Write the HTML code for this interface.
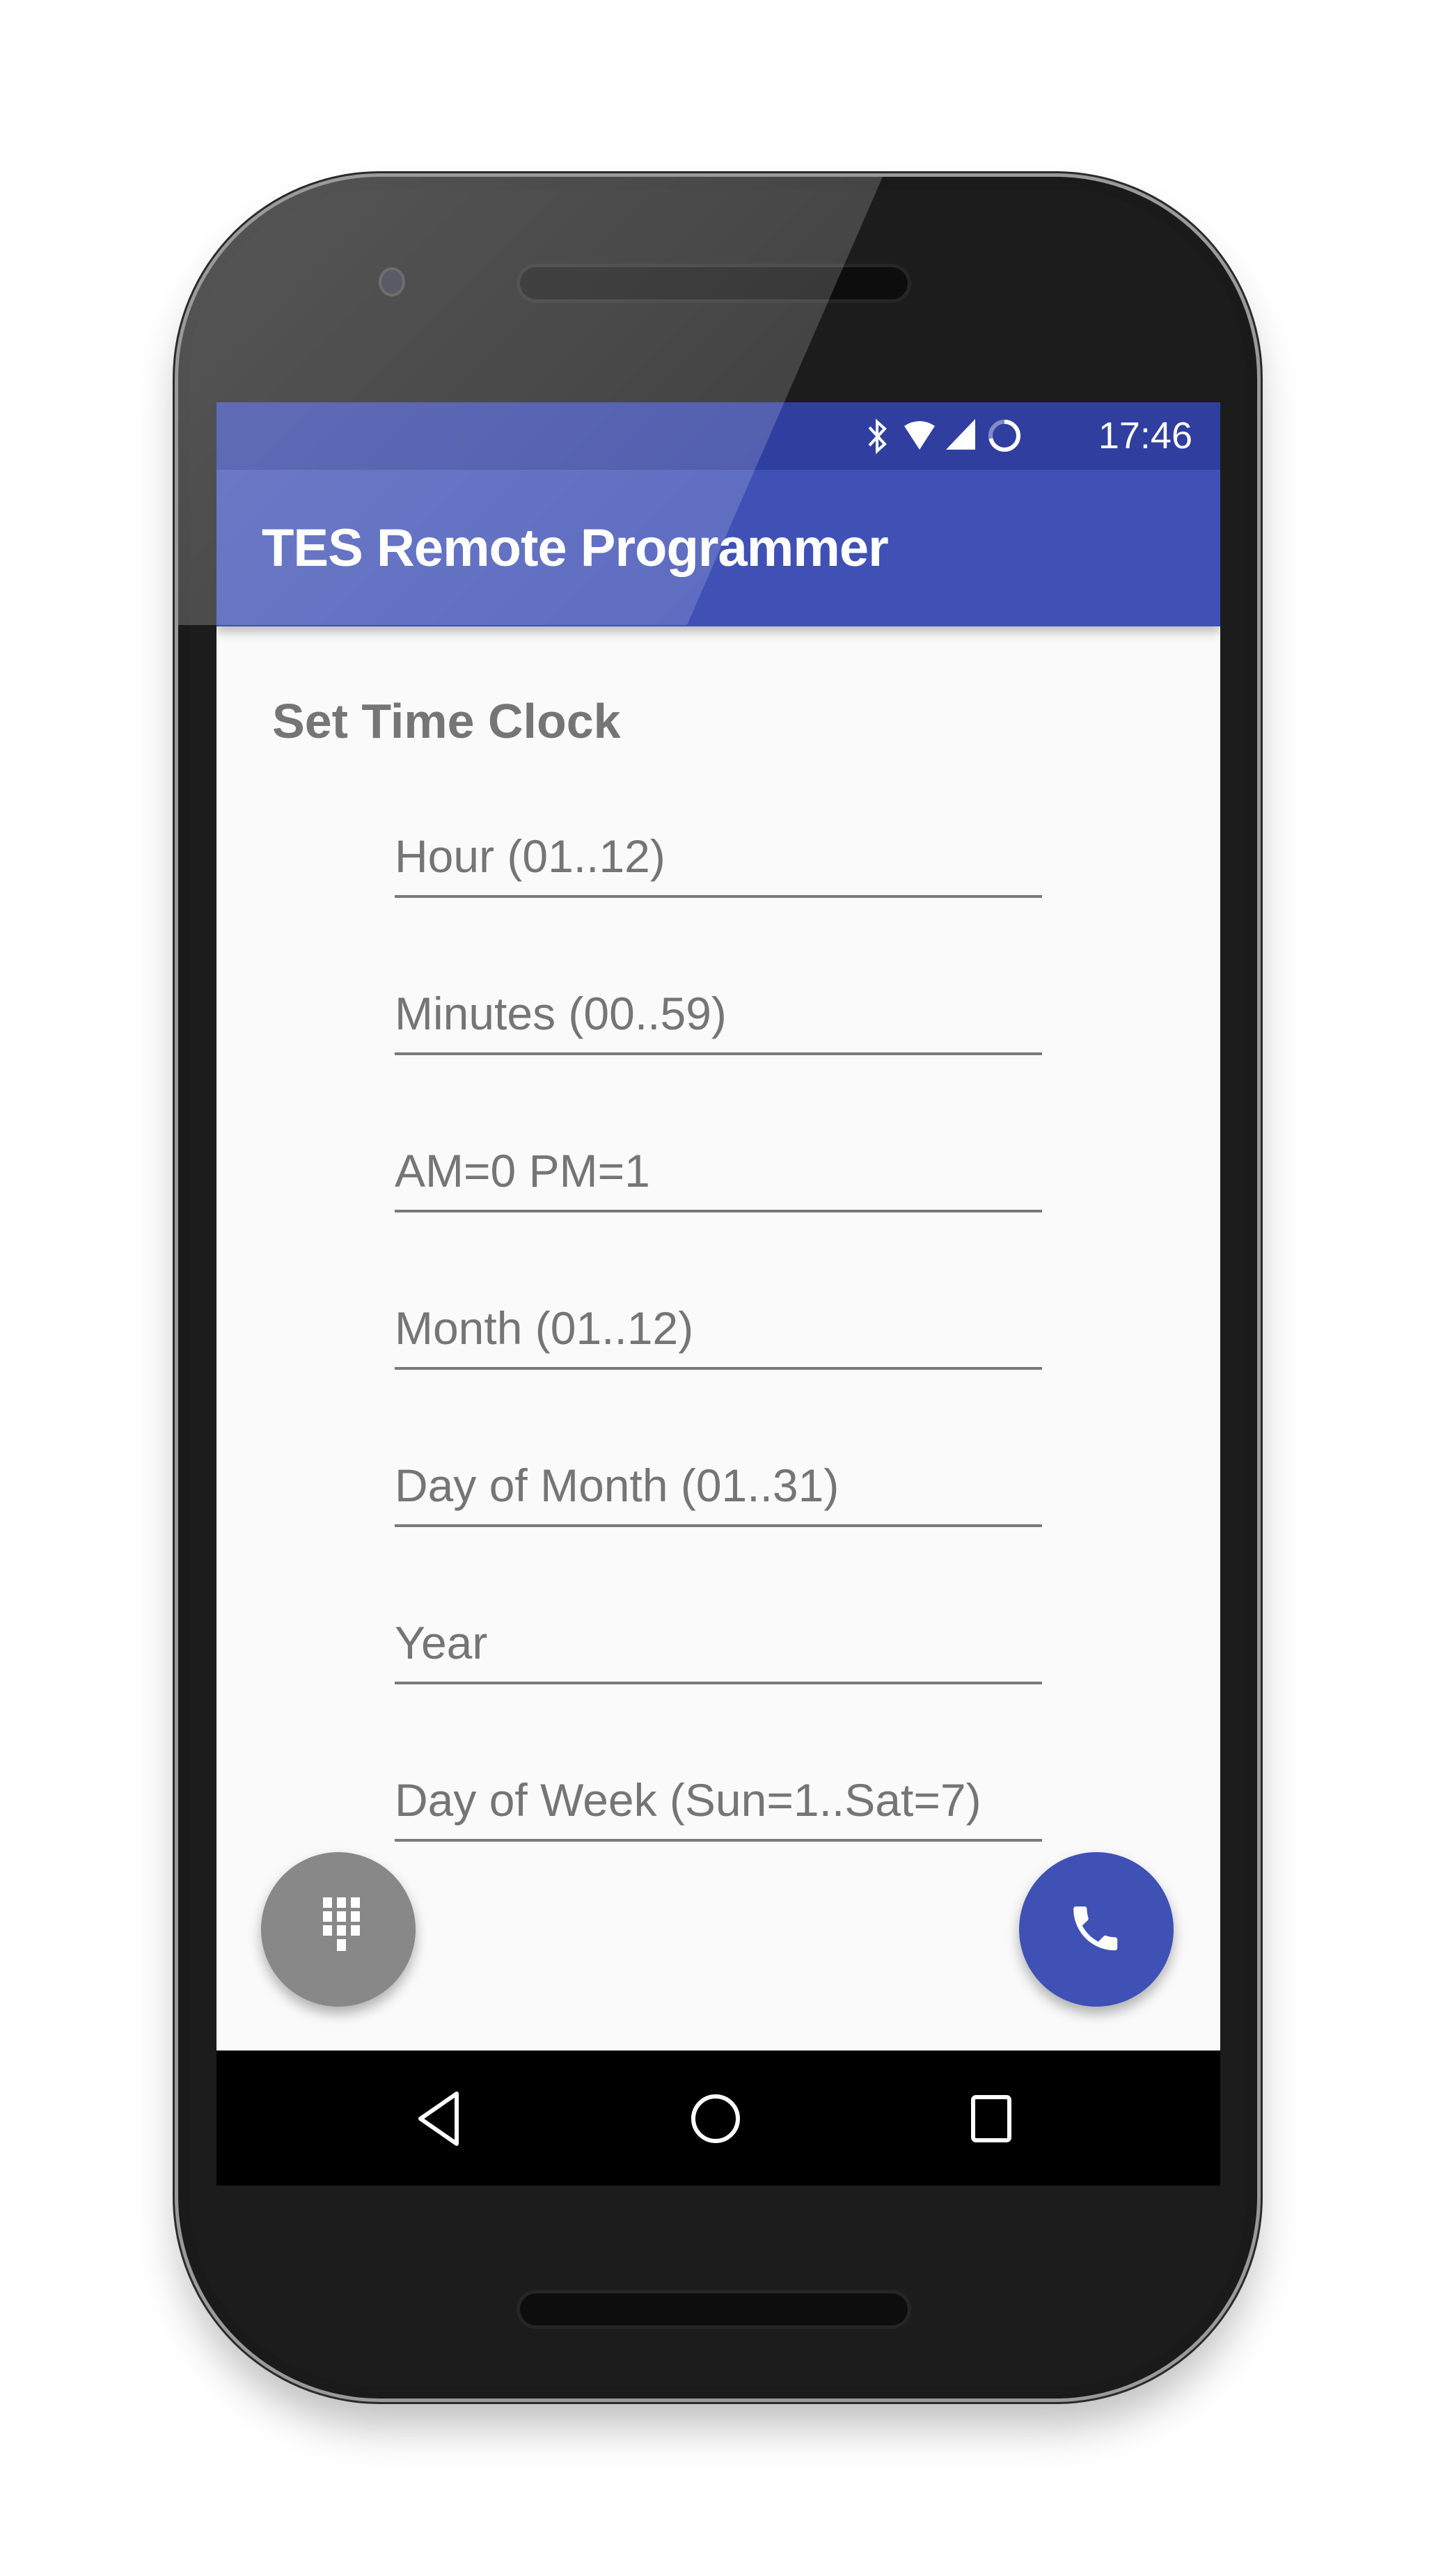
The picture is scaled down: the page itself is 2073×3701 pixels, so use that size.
<!DOCTYPE html>
<html><head><meta charset="utf-8"><style>
html,body{margin:0;padding:0;background:#fff;}
body{width:2073px;height:3701px;position:relative;overflow:hidden;font-family:"Liberation Sans",sans-serif;}
.abs{position:absolute;}
.phone{left:256px;top:254px;width:1550px;height:3192px;border-radius:290px;background:#1a1a1a;
 box-shadow:0 0 0 5px #9a9a9a,0 0 0 8px #2a2a2a,0 40px 60px rgba(0,0,0,0.25);}
.inner{left:272px;top:272px;width:1518px;height:3156px;border-radius:270px;background:#1c1c1c;}
.screen{left:311px;top:578px;width:1442px;height:2368px;background:#fafafa;overflow:hidden;}
.status{left:0;top:0;width:1442px;height:97px;background:#303f9f;}
.appbar{left:0;top:97px;width:1442px;height:225px;background:#3f51b5;box-shadow:0 8px 14px rgba(0,0,0,0.25);}
.title{left:65px;top:97px;height:225px;line-height:225px;color:#fff;font-size:76px;font-weight:bold;letter-spacing:-1px;}
.time{right:40px;top:0;height:97px;line-height:97px;color:#fff;font-size:54px;}
.h{left:80px;top:418px;color:#757575;font-size:70px;font-weight:bold;}
.f{left:256px;width:930px;border-bottom:4px solid #7a7a7a;color:#757575;font-size:66px;height:96px;line-height:80px;}
.fab{width:222px;height:222px;border-radius:50%;box-shadow:0 10px 18px rgba(0,0,0,0.3);}
.nav{left:311px;top:2946px;width:1442px;height:194px;background:#000;}
.spk{width:557px;height:46px;border-radius:23px;background:#0d0d0d;box-shadow:0 0 0 5px #262626;}
.refl{left:256px;top:254px;width:1550px;height:644px;
 clip-path:polygon(0 0,1012px 0,731px 644px,0 644px);
 background:linear-gradient(135deg,rgba(255,255,255,0.26),rgba(255,255,255,0.10));border-top-left-radius:290px;}
</style></head><body>
<div class="abs phone"></div>
<div class="abs inner"></div>
<div class="abs spk" style="left:747px;top:384px;"></div>
<div class="abs" style="left:548px;top:388px;width:30px;height:34px;border-radius:50%;background:#2a2a3a;box-shadow:0 0 0 4px #444;"></div>
<div class="abs spk" style="left:747px;top:3295px;"></div>
<div class="abs screen">
 <div class="abs status"></div>
 <div class="abs appbar"></div>
 <div class="abs title">TES Remote Programmer</div>
 <svg class="abs" style="left:930px;top:20px" width="240" height="60" viewBox="0 0 240 60">
  <path d="M8 16 L30 40 L19 50 L19 8 L30 18 L8 42" stroke="#fff" stroke-width="4" fill="none"/>
  <path d="M58 14 Q80 0 102 14 L80 48 Z" fill="#fff"/>
  <path d="M160 4 L160 48 L118 48 Z" fill="#fff"/>
  <circle cx="202" cy="28" r="20" stroke="rgba(255,255,255,0.4)" stroke-width="6" fill="none"/>
  <circle cx="202" cy="28" r="20" stroke="#fff" stroke-width="6" fill="none" stroke-dasharray="90 200" transform="rotate(-90 202 28)"/>
 </svg>
 <div class="abs time">17:46</div>
 <div class="abs h">Set Time Clock</div>
 <div class="abs f" style="top:612px">Hour (01..12)</div>
 <div class="abs f" style="top:838px">Minutes (00..59)</div>
 <div class="abs f" style="top:1064px">AM=0 PM=1</div>
 <div class="abs f" style="top:1290px">Month (01..12)</div>
 <div class="abs f" style="top:1516px">Day of Month (01..31)</div>
 <div class="abs f" style="top:1742px">Year</div>
 <div class="abs f" style="top:1968px">Day of Week (Sun=1..Sat=7)</div>
 <div class="abs fab" style="left:64px;top:2083px;background:#888;"></div>
 <svg class="abs" style="left:141px;top:2144px" width="80" height="110" viewBox="0 0 80 110">
  <g fill="#fff"><rect x="12" y="4" width="13" height="15"/><rect x="32" y="4" width="13" height="15"/><rect x="52" y="4" width="13" height="15"/>
  <rect x="12" y="24" width="13" height="15"/><rect x="32" y="24" width="13" height="15"/><rect x="52" y="24" width="13" height="15"/>
  <rect x="12" y="44" width="13" height="15"/><rect x="32" y="44" width="13" height="15"/><rect x="52" y="44" width="13" height="15"/>
  <rect x="32" y="64" width="13" height="17"/></g>
 </svg>
 <div class="abs fab" style="left:1153px;top:2083px;background:#3f51b5;"></div>
 <svg class="abs" style="left:1224px;top:2154px" width="80" height="80" viewBox="0 0 24 24">
  <path fill="#fff" d="M6.6 10.8c1.4 2.8 3.8 5.1 6.6 6.6l2.2-2.2c.3-.3.7-.4 1-.2 1.1.4 2.3.6 3.6.6.6 0 1 .4 1 1V20c0 .6-.4 1-1 1C10.6 21 3 13.4 3 4c0-.6.4-1 1-1h3.5c.6 0 1 .4 1 1 0 1.3.2 2.5.6 3.6.1.3 0 .7-.2 1L6.6 10.8z" transform="translate(-1 -1) scale(1.05)"/>
 </svg>
</div>
<div class="abs nav"></div>
<svg class="abs" style="left:594px;top:2998px" width="900" height="95" viewBox="0 0 900 95">
 <path d="M62 10 L62 82 L10 46 Z" stroke="#fff" stroke-width="6" fill="none" stroke-linejoin="round"/>
 <circle cx="434" cy="46" r="32" stroke="#fff" stroke-width="6" fill="none"/>
 <rect x="804" y="15" width="52" height="62" rx="4" stroke="#fff" stroke-width="6" fill="none"/>
</svg>
<div class="abs refl"></div>
</body></html>
